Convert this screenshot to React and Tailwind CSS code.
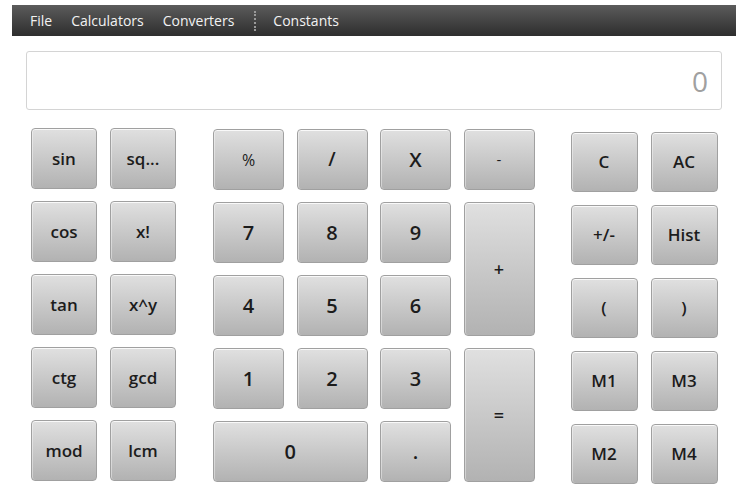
const font = { fontFamily: '"Segoe UI", "Open Sans", "Noto Sans", sans-serif' };

function Key({ label, className = "" }) {
  return (
    <button
      type="button"
      className={`flex items-center justify-center rounded-[4px] border border-[#a0a0a0] bg-gradient-to-b from-[#e0e0e0] to-[#b2b2b2] text-[#1c1c1c] shadow-[inset_0_1px_0_rgba(255,255,255,0.8),inset_1px_0_0_rgba(255,255,255,0.4)] ${className}`}
    >
      {label}
    </button>
  );
}

const fnKeys = ["sin", "sq...", "cos", "x!", "tan", "x^y", "ctg", "gcd", "mod", "lcm"];
const memKeys = ["C", "AC", "+/-", "Hist", "(", ")", "M1", "M3", "M2", "M4"];

export default function App() {
  return (
    <div className="w-[747px] h-[497px] bg-white overflow-hidden" style={font}>
      <div className="ml-[12px] mt-[5px] w-[724px] h-[31px] bg-gradient-to-b from-[#5c5c5c] to-[#2e2e2e] flex items-center pl-[18px] text-[14px] text-[#f2f2f2]">
        <span>File</span>
        <span className="ml-[19px]">Calculators</span>
        <span className="ml-[19px]">Converters</span>
        <span className="ml-[20px] h-[20px] border-l-2 border-dotted border-[#9a9a9a]" />
        <span className="ml-[17px]">Constants</span>
      </div>

      <div className="ml-[26px] mt-[15px] w-[696px] h-[59px] border border-[#d4d4d4] rounded-[3px] flex items-center justify-end pr-[13px] text-[28px] text-[#a0a0a0]">
        0
      </div>

      <div className="flex items-start mt-[18px] ml-[31px]">
        <div className="grid grid-cols-[66px_66px] auto-rows-[61px] gap-x-[13px] gap-y-[12px]">
          {fnKeys.map((k) => (
            <Key key={k} label={k} className="text-[17px] font-semibold" />
          ))}
        </div>

        <div className="ml-[37px] mt-[1px] grid grid-cols-[71px_71px_71px_71px] auto-rows-[61px] gap-x-[12.5px] gap-y-[12px] text-[20px] font-semibold">
          <Key label="%" className="text-[16px] font-normal" />
          <Key label="/" className="text-[19px]" />
          <Key label="X" />
          <Key label="-" className="text-[15px] font-normal" />
          <Key label="7" />
          <Key label="8" />
          <Key label="9" />
          <Key label="+" className="row-span-2 text-[18px]" />
          <Key label="4" />
          <Key label="5" />
          <Key label="6" />
          <Key label="1" />
          <Key label="2" />
          <Key label="3" />
          <Key label="=" className="row-span-2 text-[18px]" />
          <Key label="0" className="col-span-2" />
          <Key label="." />
        </div>

        <div className="ml-[36px] mt-[4px] grid grid-cols-[67px_67px] auto-rows-[60px] gap-x-[13px] gap-y-[13px]">
          {memKeys.map((k) => (
            <Key key={k} label={k} className="text-[17px] font-semibold" />
          ))}
        </div>
      </div>
    </div>
  );
}
